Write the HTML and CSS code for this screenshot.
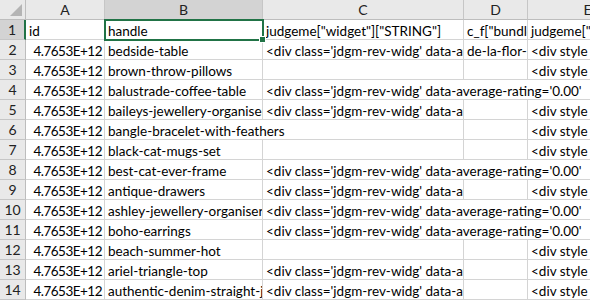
FILE: index.html
```html
<!DOCTYPE html>
<html lang="en">
<head>
    <meta charset="UTF-8">
    <title>products_export.csv - Excel</title>
    <link rel="stylesheet" href="styles.css">
</head>
<body>
    <div class="sheet">
        <div class="corner"></div>
        <div class="colhead">A</div>
        <div class="colhead active">B</div>
        <div class="colhead">C</div>
        <div class="colhead">D</div>
        <div class="colhead">E</div>

        <div class="rowhead active">1</div>
        <div class="cell">id</div>
        <div class="cell selected">handle</div>
        <div class="cell">judgeme["widget"]["STRING"]</div>
        <div class="cell">c_f["bundle"]</div>
        <div class="cell">judgeme["widget"]</div>

        <div class="rowhead">2</div>
        <div class="cell num">4.7653E+12</div>
        <div class="cell">bedside-table</div>
        <div class="cell">&lt;div class='jdgm-rev-widg' data-average-rating='0.00'</div>
        <div class="cell">de-la-flor-</div>
        <div class="cell">&lt;div style</div>

        <div class="rowhead">3</div>
        <div class="cell num">4.7653E+12</div>
        <div class="cell">brown-throw-pillows</div>
        <div class="cell"></div>
        <div class="cell"></div>
        <div class="cell">&lt;div style</div>

        <div class="rowhead">4</div>
        <div class="cell num">4.7653E+12</div>
        <div class="cell">balustrade-coffee-table</div>
        <div class="cell span3">&lt;div class='jdgm-rev-widg' data-average-rating='0.00'</div>

        <div class="rowhead">5</div>
        <div class="cell num">4.7653E+12</div>
        <div class="cell">baileys-jewellery-organiser</div>
        <div class="cell">&lt;div class='jdgm-rev-widg' data-average-rating='0.00'</div>
        <div class="cell"></div>
        <div class="cell">&lt;div style</div>

        <div class="rowhead">6</div>
        <div class="cell num">4.7653E+12</div>
        <div class="cell span2">bangle-bracelet-with-feathers</div>
        <div class="cell"></div>
        <div class="cell">&lt;div style</div>

        <div class="rowhead">7</div>
        <div class="cell num">4.7653E+12</div>
        <div class="cell">black-cat-mugs-set</div>
        <div class="cell"></div>
        <div class="cell"></div>
        <div class="cell">&lt;div style</div>

        <div class="rowhead">8</div>
        <div class="cell num">4.7653E+12</div>
        <div class="cell">best-cat-ever-frame</div>
        <div class="cell span3">&lt;div class='jdgm-rev-widg' data-average-rating='0.00'</div>

        <div class="rowhead">9</div>
        <div class="cell num">4.7653E+12</div>
        <div class="cell">antique-drawers</div>
        <div class="cell">&lt;div class='jdgm-rev-widg' data-average-rating='0.00'</div>
        <div class="cell"></div>
        <div class="cell">&lt;div style</div>

        <div class="rowhead">10</div>
        <div class="cell num">4.7653E+12</div>
        <div class="cell">ashley-jewellery-organiser</div>
        <div class="cell span3">&lt;div class='jdgm-rev-widg' data-average-rating='0.00'</div>

        <div class="rowhead">11</div>
        <div class="cell num">4.7653E+12</div>
        <div class="cell">boho-earrings</div>
        <div class="cell span3">&lt;div class='jdgm-rev-widg' data-average-rating='0.00'</div>

        <div class="rowhead">12</div>
        <div class="cell num">4.7653E+12</div>
        <div class="cell">beach-summer-hot</div>
        <div class="cell"></div>
        <div class="cell"></div>
        <div class="cell">&lt;div style</div>

        <div class="rowhead">13</div>
        <div class="cell num">4.7653E+12</div>
        <div class="cell">ariel-triangle-top</div>
        <div class="cell">&lt;div class='jdgm-rev-widg' data-average-rating='0.00'</div>
        <div class="cell"></div>
        <div class="cell">&lt;div style</div>

        <div class="rowhead">14</div>
        <div class="cell num">4.7653E+12</div>
        <div class="cell">authentic-denim-straight-jeans</div>
        <div class="cell">&lt;div class='jdgm-rev-widg' data-average-rating='0.00'</div>
        <div class="cell"></div>
        <div class="cell">&lt;div style</div>
    </div>
</body>
</html>
```

FILE: styles.css
```css
body {
    margin: 0;
    padding: 0;
    background-color: white;
    overflow: hidden;
    font-family: Lato, "Liberation Sans", sans-serif;
    font-size: 13.5px;
    color: #000;
}
.sheet {
    display: grid;
    grid-template-columns: 26px 79px 158px 201px 64px 120px;
    grid-auto-rows: 20px;
    width: 648px;
}
.corner, .colhead, .rowhead, .cell {
    box-sizing: border-box;
    min-width: 0;
    border-right: 1px solid #d4d4d4;
    border-bottom: 1px solid #d4d4d4;
    white-space: nowrap;
    overflow: hidden;
    line-height: 20px;
}
.corner {
    position: relative;
    background-color: #e9e9e9;
    border-right-color: #bdbdbd;
    border-bottom-color: #bdbdbd;
}
.corner::after {
    content: "";
    position: absolute;
    right: 3px;
    bottom: 3px;
    width: 0;
    height: 0;
    border-left: 12px solid transparent;
    border-bottom: 12px solid #b4b4b4;
}
.colhead {
    background-color: #e9e9e9;
    border-right-color: #c6c6c6;
    border-bottom-color: #bdbdbd;
    text-align: center;
    color: #222;
    font-size: 14px;
}
.rowhead {
    background-color: #e9e9e9;
    border-right-color: #bdbdbd;
    border-bottom-color: #c6c6c6;
    text-align: center;
    color: #222;
    font-size: 14px;
}
.colhead.active {
    background-color: #d3d3d3;
}
.rowhead.active {
    background-color: #d3d3d3;
    border-right: 2px solid #217346;
}
.cell {
    padding: 1px 2px 0 3px;
}
.num {
    text-align: right;
    letter-spacing: -0.5px;
    padding-right: 2px;
}
.span2 {
    grid-column: span 2;
}
.span3 {
    grid-column: span 3;
}
.selected {
    position: relative;
    overflow: visible;
}
.selected::after {
    content: "";
    position: absolute;
    left: -1px;
    top: -1px;
    right: -2px;
    bottom: -2px;
    border: 2px solid #217346;
    pointer-events: none;
}
.selected::before {
    content: "";
    position: absolute;
    right: -4px;
    bottom: -4px;
    width: 5px;
    height: 5px;
    background-color: #217346;
    border: 1px solid white;
    z-index: 2;
}
```
